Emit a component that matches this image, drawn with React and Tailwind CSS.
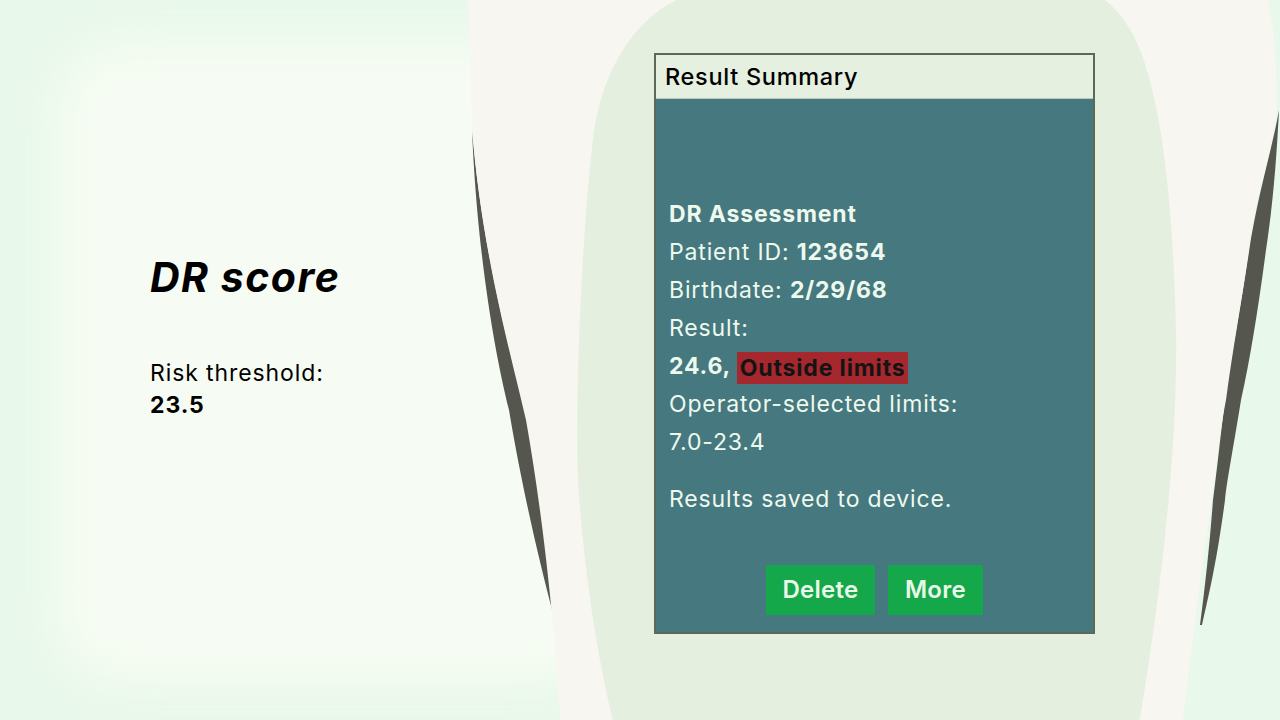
import React from 'react';

const Device = () => (
  <svg className="absolute inset-0 w-full h-full" viewBox="0 0 1280 720" preserveAspectRatio="none">
    <defs>
      <filter id="glow" x="-20%" y="-20%" width="140%" height="140%">
        <feGaussianBlur stdDeviation="22" />
      </filter>
    </defs>
    {/* soft backdrop glow */}
    <rect x="55" y="40" width="560" height="645" rx="70" fill="#f6fcf3" filter="url(#glow)" />
    {/* shadows behind the body */}
    <path
      d="M472 130 C477 250 494 350 509 410 C524 500 544 580 557 628 L559 628 C550 560 538 480 527 420 C510 350 482 250 472 130 Z"
      fill="#55564e"
    />
    <path
      d="M1279 110 C1276 170 1272 210 1266 250 C1258 310 1250 360 1241 400 C1233 450 1227 480 1225 500 C1217 560 1210 590 1202 625 L1200 625 C1206 580 1210 540 1213 500 C1217 470 1220 440 1225 400 C1232 350 1242 300 1250 245 C1260 185 1272 150 1279 110 Z"
      fill="#55564e"
    />
    {/* device body */}
    <path
      d="M468 -10 L472 125 C481 250 510 350 526 420 C540 500 553 600 561 730 L1182 730 C1192 640 1203 560 1212 500 C1218 450 1222 420 1226 400 C1234 340 1244 290 1250 240 C1262 170 1278 135 1277 95 C1276 50 1273 20 1266 -10 Z"
      fill="#f7f6f1"
    />
    {/* face */}
    <path
      d="M712 -10 C650 -4 606 55 594 130 C581 240 575 400 578 480 C586 600 603 680 615 730 L1138 730 C1160 600 1178 450 1176 330 C1173 220 1165 120 1142 55 C1130 22 1112 2 1090 -10 Z"
      fill="#e4efdf"
    />
  </svg>
);

const ResultPanel = () => (
  <div className="w-[441px] h-[581px] border-2 border-[#5b6a55] flex flex-col">
    <div className="h-[44px] bg-[#e5f0e0] border-b border-[#b8cbb6] px-[9px] flex items-center text-[23.5px] tracking-[0.7px] font-medium text-black">
      Result Summary
    </div>
    <div className="flex-1 bg-[#46787f] pt-[96px] px-[13px] text-[23px] tracking-[0.85px] leading-[38px] text-[#eef9ee]">
      <div className="font-bold">DR Assessment</div>
      <div>Patient ID: <span className="font-bold">123654</span></div>
      <div>Birthdate: <span className="font-bold">2/29/68</span></div>
      <div>Result:</div>
      <div className="font-bold">
        24.6,{' '}
        <span className="inline-block h-[32px] leading-[32px] px-[3px] bg-[#a5282e] text-[#141414] align-middle">
          Outside limits
        </span>
      </div>
      <div>Operator-selected limits:</div>
      <div>7.0-23.4</div>
      <div className="mt-[19px]">Results saved to device.</div>
      <div className="mt-[47px] flex justify-center gap-[13px] tracking-[0.3px]">
        <button className="w-[109px] h-[50px] bg-[#14a84a] text-[#e8f9e8] text-[24px] font-semibold">Delete</button>
        <button className="w-[95px] h-[50px] bg-[#14a84a] text-[#e8f9e8] text-[24px] font-semibold">More</button>
      </div>
    </div>
  </div>
);

export default function App() {
  return (
    <div className="relative w-full h-[720px] overflow-hidden font-['Inter',sans-serif] bg-[#e8f8ea]">
      <Device />
      <div className="relative flex h-full">
        <div className="w-[654px] pl-[150px] pt-[253px] text-black">
          <div className="text-[41px] leading-[48px] font-bold italic tracking-[1.5px]">DR score</div>
          <div className="mt-[56px] text-[23px] leading-[32px] tracking-[0.9px]">Risk threshold:</div>
          <div className="text-[23px] leading-[32px] font-bold tracking-[0.9px]">23.5</div>
        </div>
        <div className="pt-[53px]">
          <ResultPanel />
        </div>
      </div>
    </div>
  );
}
